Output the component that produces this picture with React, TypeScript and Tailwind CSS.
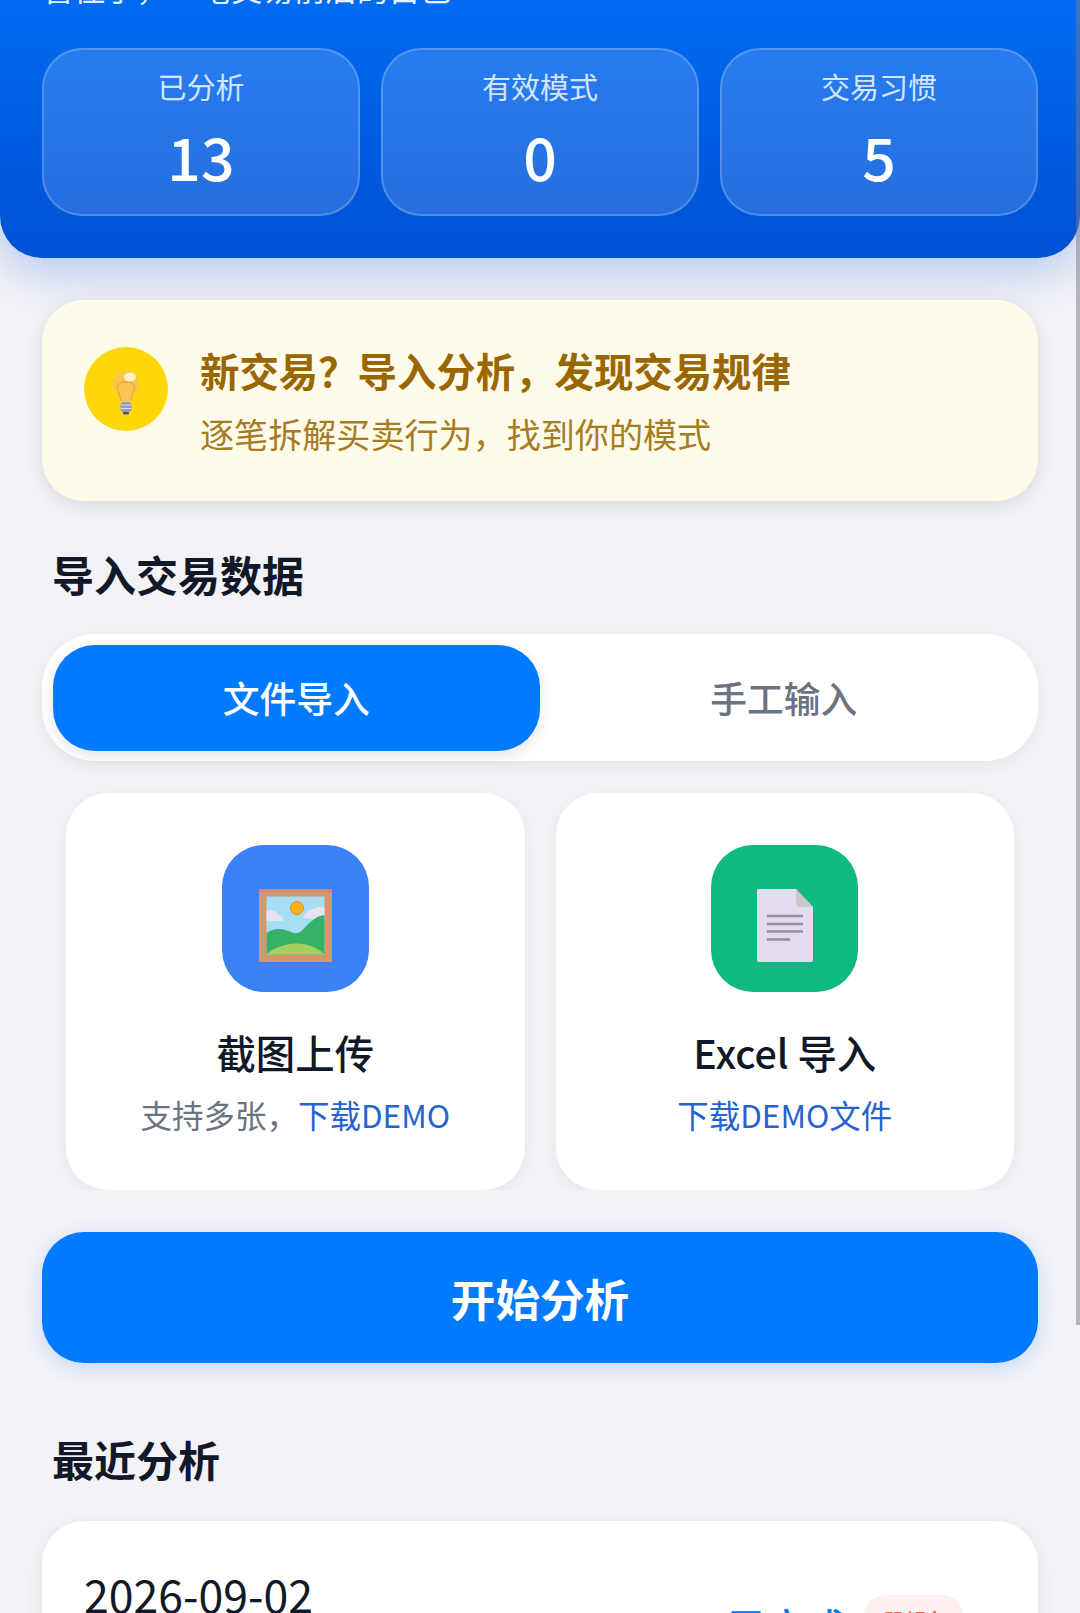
const stats = [
  { label: "已分析", value: "13" },
  { label: "有效模式", value: "0" },
  { label: "交易习惯", value: "5" },
];

const BulbIcon = () => (
  <svg width="30" height="46" viewBox="0 0 30 46" className="mt-[8px]">
    <path d="M15 1C7.500 1 2 6.600 2 13.600c0 5.200 3 8.200 5.200 11.600 1.300 2 1.800 4 2 6.300h11.600c.2-2.300.7-4.300 2-6.300C25 21.800 28 18.800 28 13.600 28 6.600 22.500 1 15 1z" fill="#f9c54f" />
    <path d="M10 31c0-5-3.500-8-3.500-13A6 6 0 0 1 15 12.500 6 6 0 0 1 23.500 18c0 5-3.500 8-3.500 13" fill="none" stroke="#eba63a" strokeWidth="1.200" />
    <ellipse cx="19" cy="7" rx="6" ry="4.500" fill="#fff0c8" />
    <rect x="9.500" y="32" width="11" height="10" rx="3" fill="#9897c0" />
    <path d="M10 35h10M10 38.500h10" stroke="#dcdcf0" strokeWidth="1.200" />
    <rect x="12" y="42" width="6" height="2.500" rx="1" fill="#55546e" />
  </svg>
);

const PictureIcon = () => (
  <svg width="73" height="73" viewBox="0 0 73 73" className="mt-[14px]">
    <rect width="73" height="73" fill="#d9956a" />
    <rect x="0" y="0" width="73" height="3" fill="#c98d6c" />
    <rect x="7.500" y="7.500" width="58" height="58" fill="#a6def5" />
    <circle cx="38" cy="19" r="6.500" fill="#fbb01c" stroke="#e58f1d" strokeWidth="1" />
    <path d="M7.500 22c5-2 11 0 13 5 3 0 4 2 3 5H7.500z" fill="#e6e2f4" />
    <path d="M44 29c2-5 5-9 11-9 4-3 8-2 10.500-1v11H50z" fill="#e6e2f4" />
    <path d="M7.500 44c7-5 14-5 22-2 5 2 8 4 13 0 6-6 13-15 23-16v39.500h-58z" fill="#36b268" />
    <path d="M7.500 65.500c7-7 19-11 30-11 11 0 21 4 28 11z" fill="#a3d15d" />
  </svg>
);

const FileIcon = () => (
  <svg width="56" height="73" viewBox="0 0 56 73" className="mt-[14px]">
    <path d="M2 0h37l17 18v53a2 2 0 0 1-2 2H2a2 2 0 0 1-2-2V2a2 2 0 0 1 2-2z" fill="#e3dcef" />
    <path d="M39 0l17 18H43a4 4 0 0 1-4-4z" fill="#c9c6cc" />
    <path d="M10 27h36M10 35h36M10 42.500h36M10 50.500h23" stroke="#958aa5" strokeWidth="2.500" />
  </svg>
);

export default function App() {
  return (
    <div className="relative h-[1613px] w-full overflow-hidden bg-[#f2f2f7] font-['Noto_Sans_CJK_SC',sans-serif]">
      <div className="rounded-b-[42px] bg-gradient-to-b from-[#006ef5] to-[#0051d5] px-[42px] pb-[42px] shadow-[0_10px_50px_rgba(0,81,213,0.3)]">
        <div className="-mt-[35px] mb-[38px] h-[45px] text-[31.5px] leading-[45px] text-white/90">管住手，一笔交易前后的自己</div>
        <div className="grid grid-cols-3 gap-[21px]">
          {stats.map((s) => (
            <div key={s.label} className="flex h-[168px] flex-col items-center rounded-[40px] border-2 border-white/20 bg-white/15 pt-[16px] text-white">
              <div className="text-[29px] leading-[40px] text-white/80">{s.label}</div>
              <div className="mt-[10px] text-[59px] font-medium leading-[80px]">{s.value}</div>
            </div>
          ))}
        </div>
      </div>

      <div className="mx-[42px] mt-[42px] flex h-[201px] items-start gap-[32px] rounded-[42px] bg-[#fffbeb] px-[42px] pt-[42px] shadow-[0_5px_21px_rgba(0,0,0,0.1)]">
        <div className="mt-[5px] flex size-[84px] items-center justify-center rounded-full bg-[#ffd60a]">
          <BulbIcon />
        </div>
        <div>
          <div className="text-[39.4px] font-bold leading-[56px] text-[#996600]">新交易？导入分析，发现交易规律</div>
          <div className="mt-[11px] text-[34.1px] leading-[48px] text-[#a67c20]">逐笔拆解买卖行为，找到你的模式</div>
        </div>
      </div>

      <div className="mx-[52px] mt-[42px] text-[42px] font-bold leading-[62px] text-[#111827]">导入交易数据</div>

      <div className="mx-[42px] mt-[29px] grid h-[127px] grid-cols-2 rounded-[53px] bg-white p-[10.5px] shadow-[0_5px_21px_rgba(0,0,0,0.06)]">
        <div className="flex items-center justify-center rounded-[42px] bg-[#007aff] pt-[1px] text-[36.750px] font-medium text-white shadow-[0_5px_16px_rgba(0,0,0,0.1)]">文件导入</div>
        <div className="flex items-center justify-center pt-[1px] text-[36.750px] font-medium text-[#6b7280]">手工输入</div>
      </div>

      <div className="mx-[42px] overflow-hidden px-[24px] pt-[32px]">
        <div className="grid h-[397px] grid-cols-2 gap-[31px]">
          <div className="flex flex-col items-center rounded-[42px] bg-white pt-[52px] shadow-[0_5px_21px_rgba(0,0,0,0.06)]">
            <div className="flex size-[147px] items-center justify-center rounded-[42px] bg-[#3b82f6]">
              <PictureIcon />
            </div>
            <div className="mt-[31px] text-[39.4px] font-medium leading-[58px] text-[#111827]">截图上传</div>
            <div className="mt-[10px] text-[31.5px] leading-[46px] text-[#6b7280]">
              支持多张，<span className="text-[#2563d0]">下载DEMO</span>
            </div>
          </div>
          <div className="flex flex-col items-center rounded-[42px] bg-white pt-[52px] shadow-[0_5px_21px_rgba(0,0,0,0.06)]">
            <div className="flex size-[147px] items-center justify-center rounded-[42px] bg-[#10b981]">
              <FileIcon />
            </div>
            <div className="mt-[31px] text-[39.4px] font-medium leading-[58px] text-[#111827]">Excel 导入</div>
            <div className="mt-[10px] text-[31.5px] leading-[46px] text-[#2563d0]">下载DEMO文件</div>
          </div>
        </div>
      </div>

      <div className="mx-[42px] mt-[42px] flex h-[131px] items-center justify-center rounded-[42px] bg-[#007aff] pt-[1px] text-[44.600px] font-bold text-white shadow-[0_5px_21px_rgba(0,122,255,0.2)]">开始分析</div>

      <div className="mx-[52px] mt-[65px] text-[42px] font-bold leading-[62px] text-[#111827]">最近分析</div>

      <div className="mx-[42px] mt-[31px] flex h-[300px] items-start justify-between rounded-[42px] bg-white p-[42px] shadow-[0_5px_21px_rgba(0,0,0,0.08)]">
        <div className="mt-[1px] text-[44.600px] leading-[60px] text-[#111827]">2026-09-02</div>
        <div className="mr-[33px] mt-[32px] flex items-start gap-[18px]">
          <div className="mt-[5px] text-[39.4px] font-medium leading-[52px] text-[#007aff]">已完成</div>
          <div className="rounded-[21px] bg-[#ffefef] px-[18px] pb-[8px] pt-[6px] text-[31.5px] leading-[46px] text-[#ff5a50]">删除</div>
        </div>
      </div>

      {/* scrollbar thumb */}
      <div className="absolute right-0 top-0 h-[1325px] w-[4px] bg-[#7a7a85]/50" />
    </div>
  );
}
